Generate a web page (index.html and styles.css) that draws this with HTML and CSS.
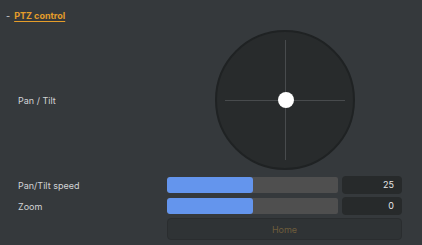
FILE: index.html
```html
<!DOCTYPE html>
<html>
<head>
<meta charset="utf-8">
<link rel="stylesheet" href="styles.css">
</head>
<body>
<div class="panel">
  <div class="header"><span class="dash">-</span><span class="title">PTZ control</span></div>
  <div class="row joy-row">
    <div class="label">Pan / Tilt</div>
    <div class="control joy-wrap">
      <div class="joystick">
        <div class="hline"></div>
        <div class="vline"></div>
        <div class="knob"></div>
      </div>
    </div>
  </div>
  <div class="row slider-row">
    <div class="label">Pan/Tilt speed</div>
    <div class="control slider-ctl">
      <div class="track"><div class="fill" style="width:50%"></div></div>
      <div class="num">25</div>
    </div>
  </div>
  <div class="row slider-row">
    <div class="label">Zoom</div>
    <div class="control slider-ctl">
      <div class="track"><div class="fill" style="width:50%"></div></div>
      <div class="num">0</div>
    </div>
  </div>
  <div class="row">
    <div class="label"></div>
    <div class="control"><button class="home">Home</button></div>
  </div>
</div>
</body>
</html>
```
FILE: styles.css
```css
html, body {
  margin: 0;
  padding: 0;
  background: #35393c;
  width: 422px;
  height: 245px;
  overflow: hidden;
  font-family: Inter, "Noto Sans", sans-serif;
  font-size: 9px;
  color: #d2d4d6;
}
.panel {
  padding: 9px 20px 0 6px;
}
.header {
  display: flex;
  align-items: center;
  gap: 4px;
  height: 13px;
}
.dash {
  color: #d2d4d6;
}
.title {
  color: #e59d2a;
  font-weight: 700;
  text-decoration: underline;
  text-underline-offset: 2px;
}
.row {
  display: grid;
  grid-template-columns: 149px 1fr;
  align-items: center;
  padding-left: 12px;
}
.joy-row {
  margin-top: 8px;
}
.joy-wrap {
  display: flex;
  justify-content: center;
}
.joystick {
  position: relative;
  width: 136px;
  height: 136px;
  border: 2px solid #1f2223;
  border-radius: 50%;
  background: #282b2c;
}
.hline {
  position: absolute;
  left: 8px;
  right: 8px;
  top: 68px;
  height: 1px;
  background: #484b4d;
}
.vline {
  position: absolute;
  top: 8px;
  bottom: 8px;
  left: 68px;
  width: 1px;
  background: #484b4d;
}
.knob {
  position: absolute;
  left: 61px;
  top: 60px;
  width: 16px;
  height: 16px;
  border-radius: 50%;
  background: #ffffff;
}
.slider-row {
  margin-top: 3px;
}
.joy-row + .slider-row {
  margin-top: 6px;
}
.slider-ctl {
  display: flex;
  align-items: center;
  gap: 4px;
}
.track {
  flex: 1;
  height: 16px;
  background: #4f4f4f;
  border-radius: 2px;
  overflow: hidden;
}
.fill {
  height: 100%;
  background: #6495ed;
  border-radius: 3px;
}
.num {
  width: 52px;
  height: 18px;
  line-height: 18px;
  padding-right: 8px;
  text-align: right;
  background: #272a2b;
  border-radius: 4px;
  color: #e6e6e6;
}
.home {
  display: block;
  width: 100%;
  height: 22px;
  margin-top: 3px;
  background: #2f3335;
  border: 1px solid #2a2d2f;
  border-radius: 4px;
  color: #6e5d3c;
  font-family: inherit;
  font-size: 9px;
  padding: 0;
}
```
